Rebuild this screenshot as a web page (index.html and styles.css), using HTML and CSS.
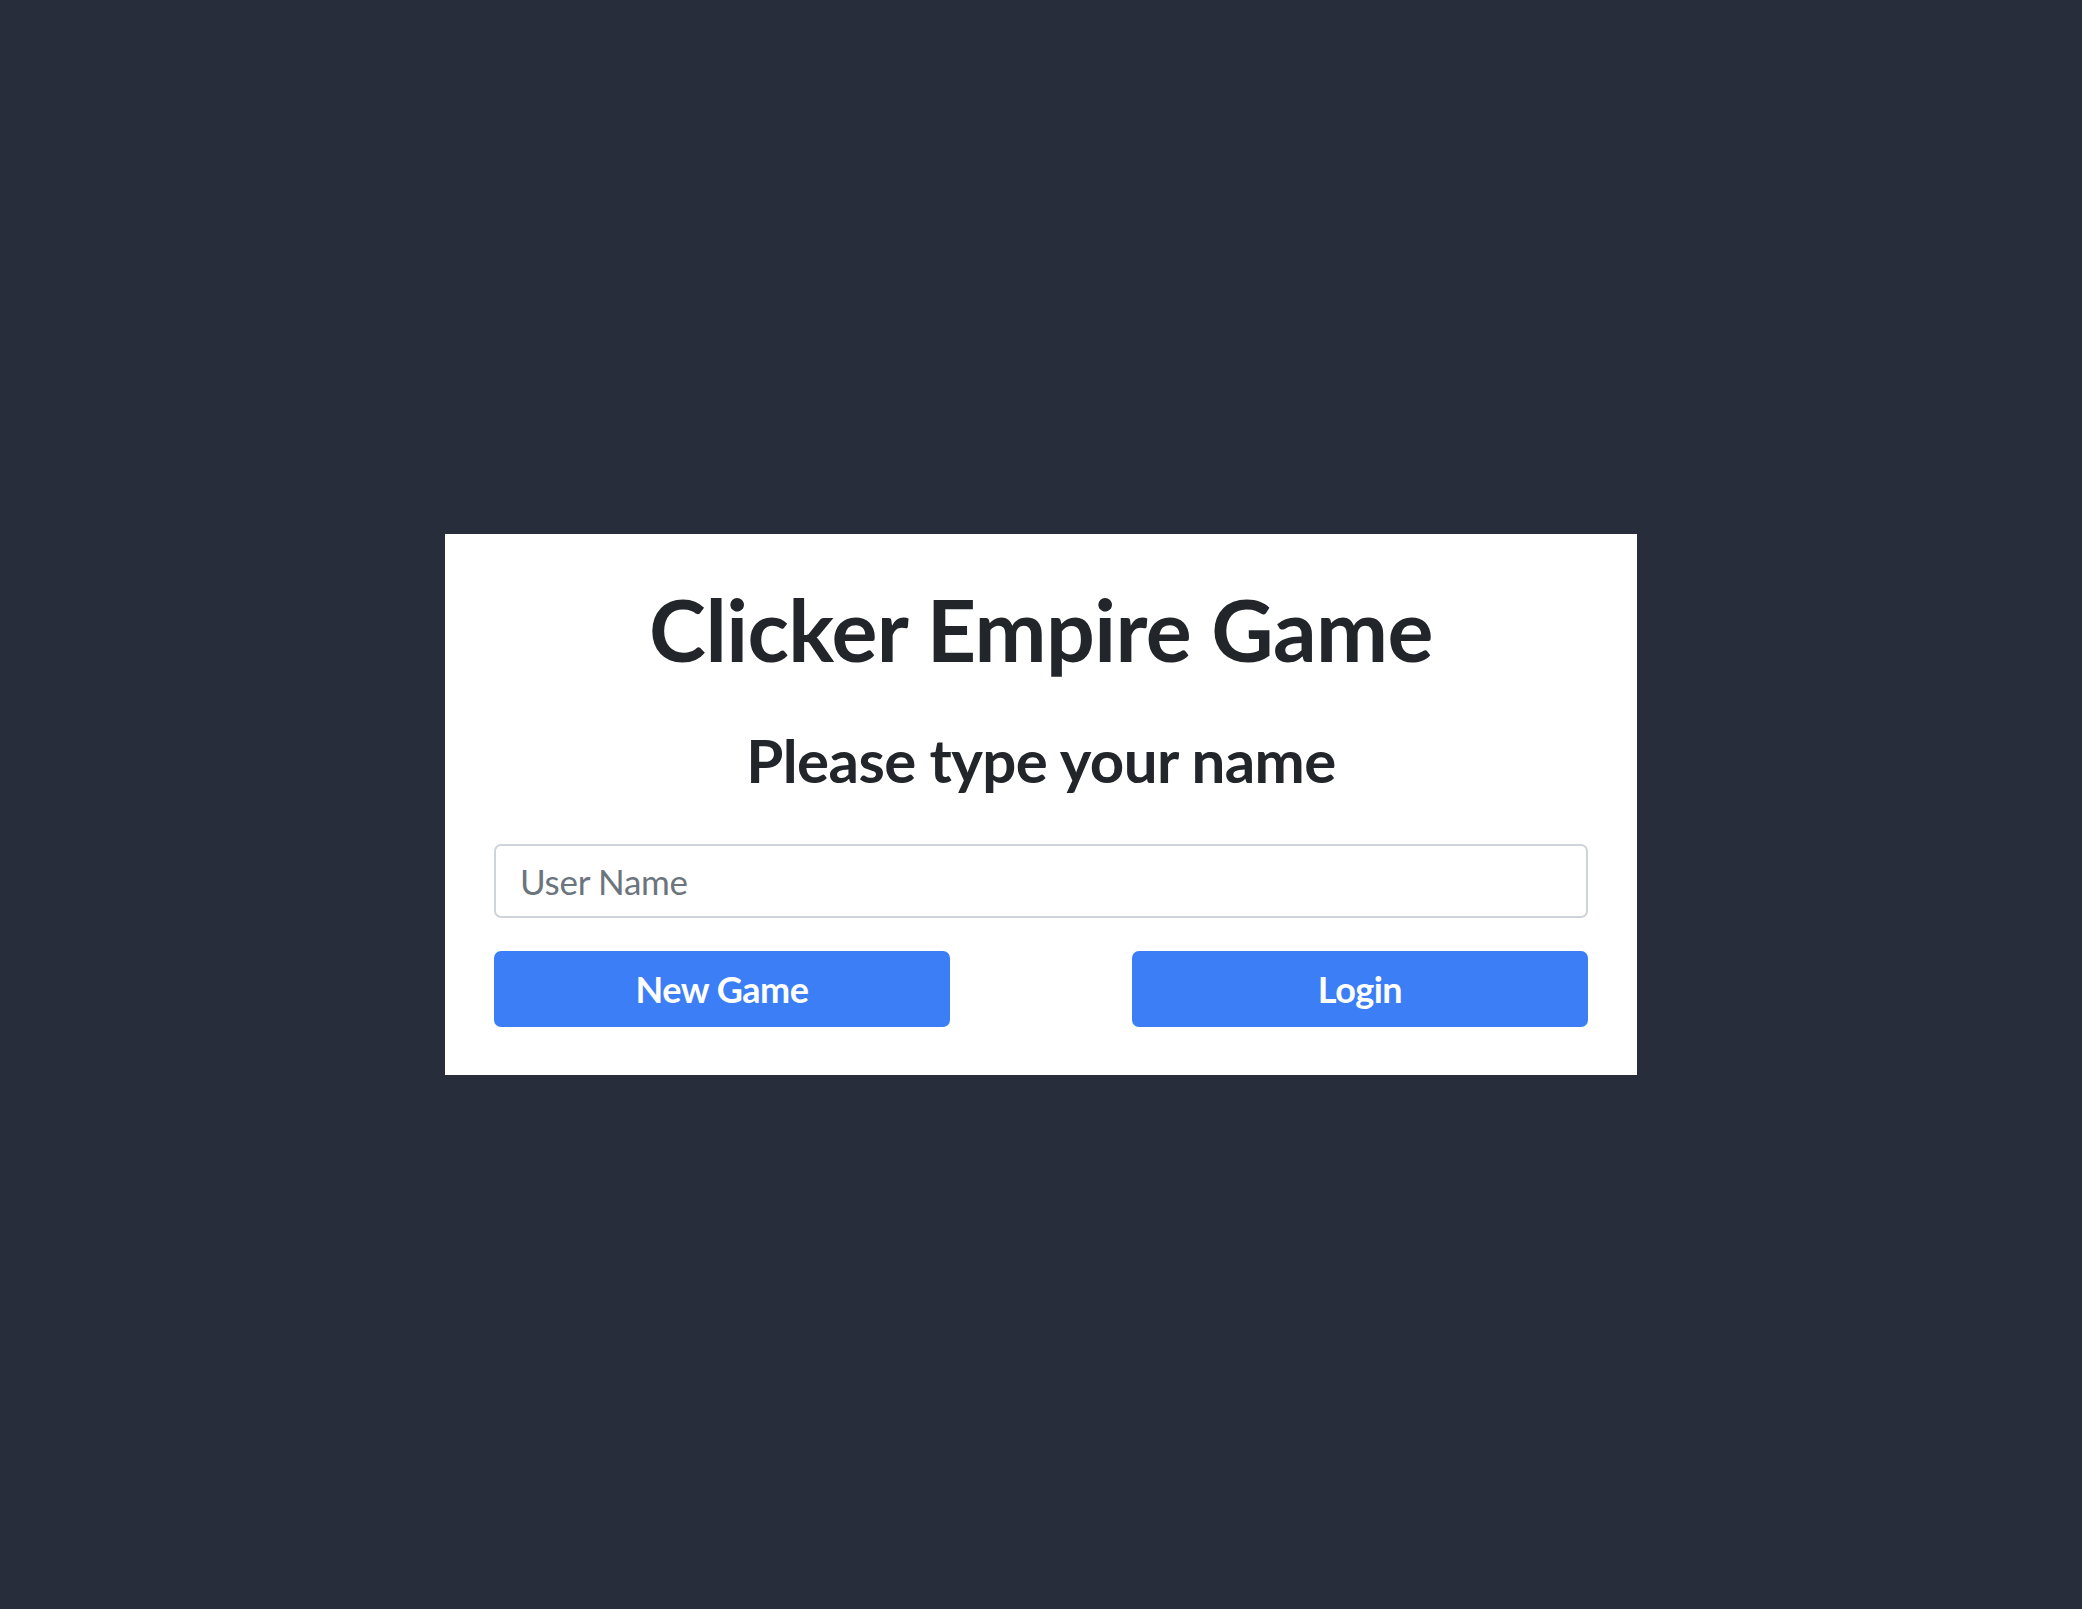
FILE: index.html
```html
<!DOCTYPE html>
<html lang="en">
<head>
<meta charset="utf-8">
<title>Clicker Empire Game</title>
<link rel="stylesheet" href="styles.css">
</head>
<body>
<main class="page">
  <section class="card">
    <h1 class="title">Clicker Empire Game</h1>
    <h2 class="subtitle">Please type your name</h2>
    <input class="name-input" type="text" placeholder="User Name">
    <div class="actions">
      <button class="btn" type="button">New Game</button>
      <button class="btn" type="button">Login</button>
    </div>
  </section>
</main>
</body>
</html>
```

FILE: styles.css
```css
* { box-sizing: border-box; }
html, body { margin: 0; padding: 0; }
body {
  background: #272d3a;
  font-family: Lato, "Noto Sans", sans-serif;
  color: #22252a;
}
.page {
  min-height: 100vh;
  display: flex;
  align-items: center;
  justify-content: center;
}
.card {
  width: 1192px;
  background: #ffffff;
  padding: 43px 49px 48px;
  display: flex;
  flex-direction: column;
}
.title {
  margin: 0;
  text-align: center;
  font-size: 86px;
  line-height: 1.2;
  font-weight: 700;
  letter-spacing: -0.6px;
  color: #22252a;
}
.subtitle {
  margin: 43px 0 0;
  text-align: center;
  font-size: 60px;
  line-height: 1.2;
  font-weight: 700;
  letter-spacing: -0.6px;
  color: #22252a;
}
.name-input {
  margin-top: 48px;
  height: 74px;
  width: 100%;
  border: 2px solid #ced4da;
  border-radius: 7px;
  padding: 0 24px;
  font-family: inherit;
  font-size: 35px;
  letter-spacing: -0.3px;
  color: #22252a;
  background: #fff;
  outline: none;
}
.name-input::placeholder { color: #6c757d; }
.actions {
  margin-top: 33px;
  display: flex;
  justify-content: space-between;
}
.btn {
  width: 456px;
  height: 76px;
  border: none;
  border-radius: 7px;
  background: #3b7ef5;
  color: #ffffff;
  font-family: inherit;
  font-size: 36px;
  font-weight: 700;
  letter-spacing: -0.5px;
  cursor: pointer;
}
```
